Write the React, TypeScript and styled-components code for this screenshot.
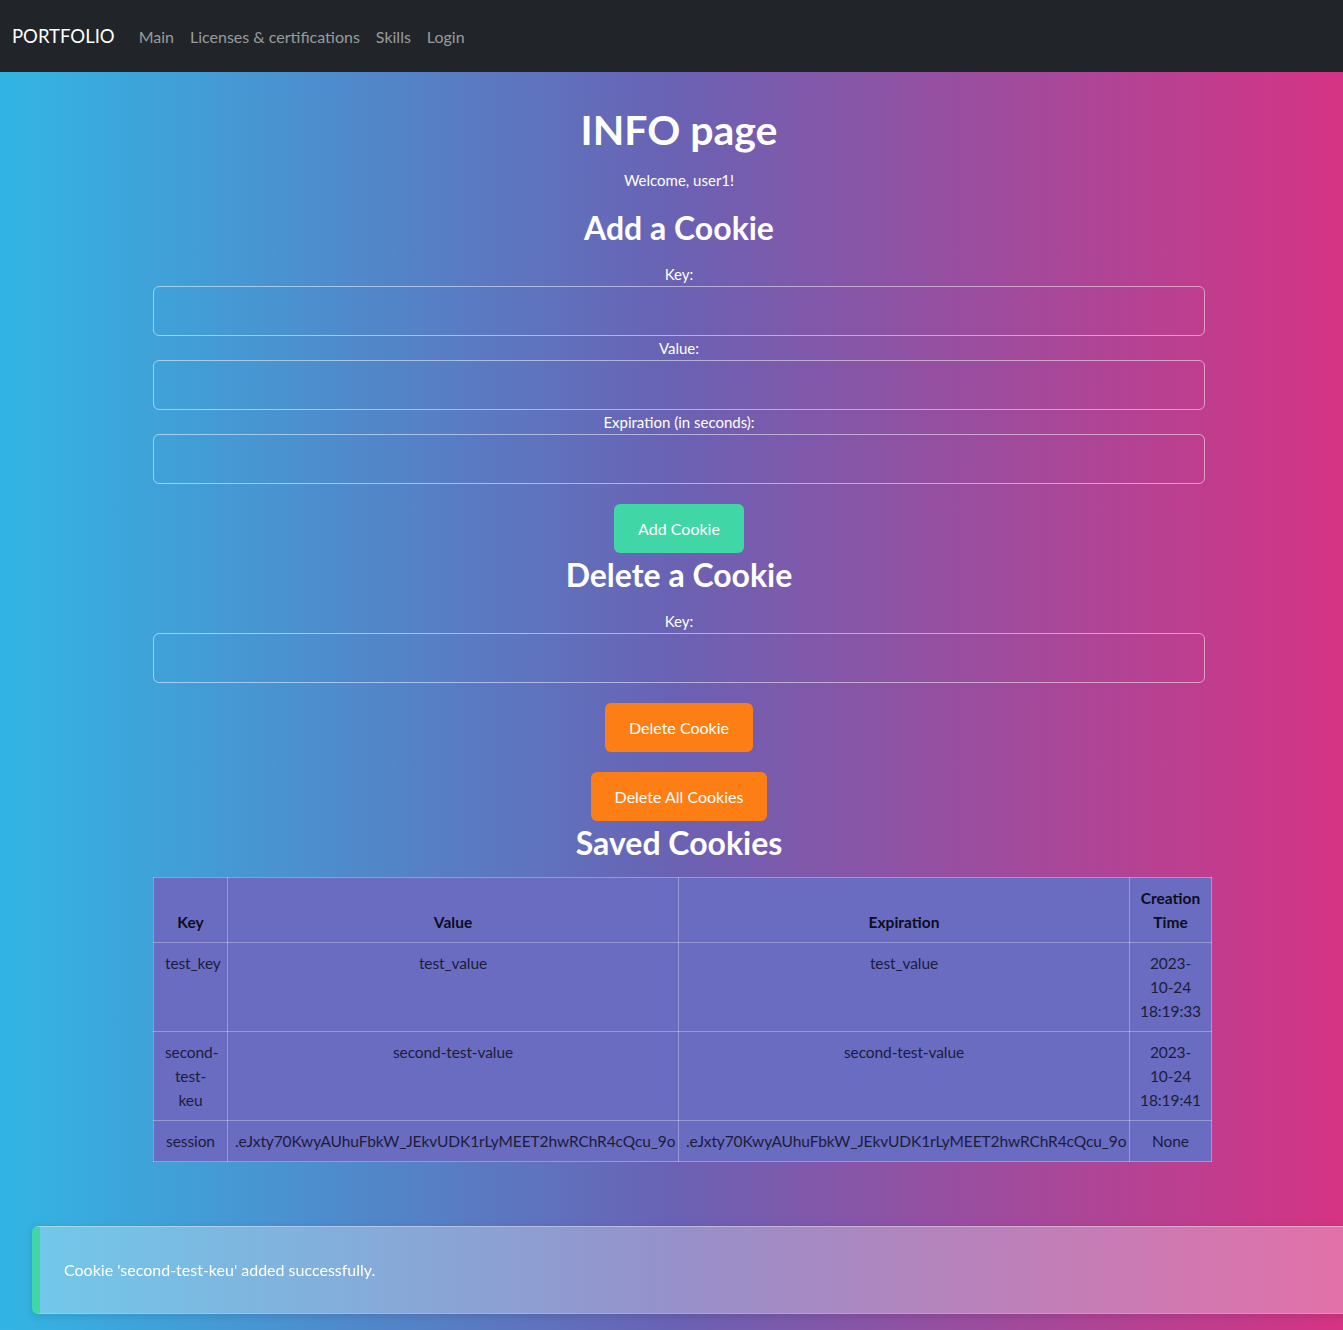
import React, { FC } from 'react'
import styled, { createGlobalStyle } from 'styled-components'

const GlobalStyle = createGlobalStyle`
  html, body {
    margin: 0;
    padding: 0;
  }
  body {
    font-family: Lato, "Open Sans", sans-serif;
    font-size: 16px;
    line-height: 1.5;
    color: #212529;
    background: linear-gradient(to right, #32b5e4 0%, #6a62b4 50%, #d63384 100%);
    min-height: 100vh;
  }
  * {
    box-sizing: border-box;
  }
`

const Navbar = styled.nav`
  display: flex;
  align-items: center;
  height: 72px;
  padding: 1px 12px 0;
  background: #212529;
`

const Brand = styled.a`
  color: #fff;
  font-size: 18.5px;
  margin-right: 16px;
  text-decoration: none;
`

const NavLink = styled.a`
  color: rgba(255, 255, 255, 0.55);
  padding: 8px;
  text-decoration: none;
`

const Page = styled.main`
  padding: 0 0 160px 15px;
`

const Content = styled.div`
  width: 1052px;
  margin: 0 auto;
  display: flex;
  flex-direction: column;
  align-items: center;
  color: #fff;
`

const Title = styled.h1`
  font-size: 41px;
  font-weight: 700;
  line-height: 48px;
  margin: 34px 0 14px;
`

const Welcome = styled.p`
  font-size: 15px;
  line-height: 24px;
  margin: 0 0 14px;
`

const SubTitle = styled.h2`
  font-size: 32px;
  font-weight: 700;
  line-height: 38px;
  margin: 3px 0 15px;
`

const Form = styled.form`
  width: 100%;
  display: flex;
  flex-direction: column;
  align-items: center;
`

const Label = styled.label`
  font-size: 15px;
  line-height: 24px;
`

const Input = styled.input`
  width: 100%;
  height: 50px;
  margin: 0;
  border: 1px solid rgba(255, 255, 255, 0.5);
  border-radius: 6px;
  background: transparent;
  color: #fff;
  font: inherit;
  padding: 6px 12px;
`

const Button = styled.button<{ $color: string }>`
  margin-top: 20px;
  height: 49px;
  padding: 0 24px;
  border: none;
  border-radius: 6px;
  background: ${(p) => p.$color};
  color: #fff;
  font-family: inherit;
  font-size: 16px;
`

const Table = styled.table`
  width: 1058px;
  align-self: flex-start;
  table-layout: fixed;
  border-collapse: collapse;
  background: #6a6cc2;
  color: #1c1d3a;
  font-size: 15.5px;
  line-height: 24px;
  border: 1px solid rgba(255, 255, 255, 0.3);
`

const Th = styled.th`
  padding: 8px;
  font-weight: 700;
  vertical-align: bottom;
  border: 1px solid rgba(255, 255, 255, 0.3);
  color: #0d0d1c;
`

const Td = styled.td<{ $pad?: number }>`
  padding: 8px ${(p) => p.$pad ?? 7}px;
  text-align: center;
  vertical-align: top;
  letter-spacing: -0.1px;
  border: 1px solid rgba(255, 255, 255, 0.3);
`

const Toast = styled.div`
  position: fixed;
  left: 32px;
  bottom: 16px;
  width: 1340px;
  height: 88px;
  display: flex;
  align-items: center;
  padding-left: 24px;
  border-left: 8px solid #40d6a5;
  border-radius: 6px;
  background: rgba(255, 255, 255, 0.3);
  border-top: 1px solid rgba(255, 255, 255, 0.35);
  border-bottom: 1px solid rgba(255, 255, 255, 0.2);
  box-shadow: 0 2px 8px rgba(0, 0, 0, 0.12);
  color: #fff;
  font-size: 16px;
`

const session = '.eJxty70KwyAUhuFbkW_JEkvUDK1rLyMEET2hwRChR4cQcu_9o'

const cookies = [
  { key: 'test_key', value: 'test_value', expiration: 'test_value', created: '2023-10-24 18:19:33' },
  { key: 'second-test-keu', value: 'second-test-value', expiration: 'second-test-value', created: '2023-10-24 18:19:41' },
  { key: 'session', value: session, expiration: session, created: 'None' },
]

const App: FC = () => (
  <>
    <GlobalStyle />
    <Navbar>
      <Brand href="#">PORTFOLIO</Brand>
      <NavLink href="#">Main</NavLink>
      <NavLink href="#">Licenses &amp; certifications</NavLink>
      <NavLink href="#">Skills</NavLink>
      <NavLink href="#">Login</NavLink>
    </Navbar>
    <Page>
      <Content>
        <Title>INFO page</Title>
        <Welcome>Welcome, user1!</Welcome>
        <SubTitle>Add a Cookie</SubTitle>
        <Form onSubmit={(e) => e.preventDefault()}>
          <Label>Key:</Label>
          <Input />
          <Label>Value:</Label>
          <Input />
          <Label>Expiration (in seconds):</Label>
          <Input />
          <Button $color="#40d6a5">Add Cookie</Button>
        </Form>
        <SubTitle>Delete a Cookie</SubTitle>
        <Form onSubmit={(e) => e.preventDefault()}>
          <Label>Key:</Label>
          <Input />
          <Button $color="#fd7e14">Delete Cookie</Button>
        </Form>
        <Button $color="#fd7e14">Delete All Cookies</Button>
        <SubTitle>Saved Cookies</SubTitle>
        <Table>
          <colgroup>
            <col style={{ width: 74 }} />
            <col style={{ width: 451 }} />
            <col style={{ width: 451 }} />
            <col style={{ width: 82 }} />
          </colgroup>
          <thead>
            <tr>
              <Th>Key</Th>
              <Th>Value</Th>
              <Th>Expiration</Th>
              <Th>Creation Time</Th>
            </tr>
          </thead>
          <tbody>
            {cookies.map((c) => (
              <tr key={c.key}>
                <Td $pad={11}>{c.key}</Td>
                <Td>{c.value}</Td>
                <Td>{c.expiration}</Td>
                <Td $pad={10}>{c.created}</Td>
              </tr>
            ))}
          </tbody>
        </Table>
      </Content>
    </Page>
    <Toast>Cookie 'second-test-keu' added successfully.</Toast>
  </>
)

export default App
